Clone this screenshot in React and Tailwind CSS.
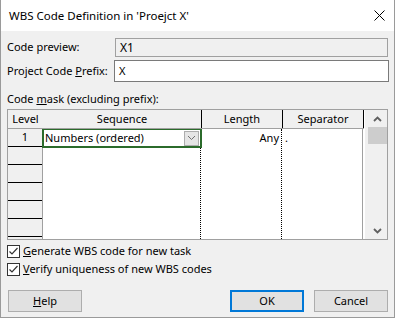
import React from 'react';

const font = { fontFamily: '"Noto Sans", "Liberation Sans", sans-serif' };

function CheckBox({ checked }) {
  return (
    <div className="w-[13px] h-[13px] border border-[#333333] bg-white flex items-center justify-center shrink-0">
      {checked && (
        <svg width="11" height="11" viewBox="0 0 11 11">
          <polyline points="1.5,5.5 4,8 9.5,2" fill="none" stroke="#333333" strokeWidth="1.2" />
        </svg>
      )}
    </div>
  );
}

function Chevron({ up }) {
  return (
    <svg width="9" height="6" viewBox="0 0 9 6">
      <polyline
        points={up ? '1,5 4.5,1.5 8,5' : '1,1 4.5,4.5 8,1'}
        fill="none"
        stroke="#606060"
        strokeWidth="1.8"
      />
    </svg>
  );
}

export default function App() {
  const rows = [0, 1, 2, 3, 4, 5];

  return (
    <div className="w-[395px] h-[318px] bg-[#f0f0f0] border-l border-r border-b border-[#9a9a9a] flex flex-col text-[11px] text-black whitespace-nowrap" style={font}>
      {/* Title bar */}
      <div className="h-[31px] bg-white flex items-center justify-between pl-[8px] pr-[9px] shrink-0">
        <span className="text-[11.5px]">WBS Code Definition in 'Proejct X'</span>
        <svg width="11" height="11" viewBox="0 0 11 11">
          <path d="M0.5 0.5 L10.5 10.5 M10.5 0.5 L0.5 10.5" stroke="#000" strokeWidth="1" />
        </svg>
      </div>

      <div className="flex flex-col px-[6px] pt-[7px]">
        {/* Code preview */}
        <div className="flex items-center h-[19px]">
          <span className="w-[107px]">Code preview:</span>
          <div className="flex-1 h-[19px] ml-[1px] border border-[#a0a0a0] bg-[#f0f0f0] flex items-center pl-[4px] text-[12px]">
            X1
          </div>
        </div>

        {/* Prefix */}
        <div className="flex items-center h-[22px] mt-[3px] -mr-[1px]">
          <span className="w-[107px]">
            Project Code <span className="underline">P</span>refix:
          </span>
          <div className="flex-1 h-[22px] border border-[#7a7a7a] bg-white flex items-center pl-[4px]">
            X
          </div>
        </div>

        {/* Code mask label */}
        <div className="h-[17px] mt-[8px] leading-[17px]">
          Code <span className="underline">m</span>ask (excluding prefix):
        </div>

        {/* Grid */}
        <div className="mt-[2px] h-[131px] border border-[#a0a0a0] bg-white flex">
          <div className="flex flex-col w-[356px]">
            {/* Header */}
            <div className="h-[19px] flex bg-[#f0f0f0] border-b border-[#a0a0a0]">
              <div className="w-[35px] flex items-center justify-center">Level</div>
              <div className="w-[159px] flex items-center justify-center border-r border-[#000]">Sequence</div>
              <div className="w-[81px] flex items-center justify-center border-r border-[#000]">Length</div>
              <div className="w-[81px] flex items-center justify-center border-r border-[#000]">Separator</div>
            </div>
            {/* Body */}
            <div className="flex flex-1 overflow-hidden">
              <div className="w-[35px] bg-[#f0f0f0] border-r border-[#a0a0a0] flex flex-col shrink-0">
                {rows.map((r) => (
                  <div key={r} className="h-[18px] border-b border-black flex items-center justify-center shrink-0">
                    {r === 0 ? '1' : ''}
                  </div>
                ))}
              </div>
              <div className="w-[158px] relative border-r border-dotted border-black shrink-0">
                <div className="absolute -left-[1px] -top-[1px] w-[160px] h-[20px] border-2 border-[#2b6b2b] flex items-center justify-between pl-[1px] pr-[1px]">
                  <span>Numbers (ordered)</span>
                  <div className="w-[15px] h-[15px] bg-[#e5e5e5] border border-[#adadad] flex items-center justify-center">
                    <svg width="9" height="6" viewBox="0 0 9 6">
                      <polyline points="1,1 4.5,4.5 8,1" fill="none" stroke="#707070" strokeWidth="1" />
                    </svg>
                  </div>
                </div>
              </div>
              <div className="w-[81px] border-r border-dotted border-black shrink-0">
                <div className="h-[18px] flex items-center justify-end pr-[2px]">Any</div>
              </div>
              <div className="w-[81px] border-r border-[#a0a0a0] shrink-0">
                <div className="h-[18px] flex items-center pl-[3px]">.</div>
              </div>
            </div>
          </div>
          {/* Scrollbar */}
          <div className="flex-1 bg-[#f0f0f0] flex flex-col items-center pl-[3px] border-l border-white">
            <div className="h-[17px] w-full flex items-center justify-center">
              <Chevron up />
            </div>
            <div className="w-full h-[17px] bg-[#cdcdcd]" />
            <div className="flex-1" />
            <div className="h-[17px] w-full flex items-center justify-center">
              <Chevron />
            </div>
          </div>
        </div>

        {/* Checkboxes */}
        <div className="flex items-center gap-[3px] mt-[5px] h-[13px]">
          <CheckBox checked />
          <span>
            <span className="underline">G</span>enerate WBS code for new task
          </span>
        </div>
        <div className="flex items-center gap-[3px] mt-[5px] h-[13px]">
          <CheckBox checked />
          <span>
            <span className="underline">V</span>erify uniqueness of new WBS codes
          </span>
        </div>

        {/* Buttons */}
        <div className="flex items-center mt-[14px]">
          <button className="w-[74px] h-[22px] ml-[1px] bg-[#e1e1e1] border border-[#adadad] flex items-center justify-center">
            <span><span className="underline">H</span>elp</span>
          </button>
          <div className="flex-1" />
          <button className="w-[74px] h-[22px] bg-[#e1e1e1] border-2 border-[#0078d7] flex items-center justify-center">
            OK
          </button>
          <button className="w-[74px] h-[22px] ml-[10px] bg-[#e1e1e1] border border-[#adadad] flex items-center justify-center">
            Cancel
          </button>
        </div>
      </div>
    </div>
  );
}
